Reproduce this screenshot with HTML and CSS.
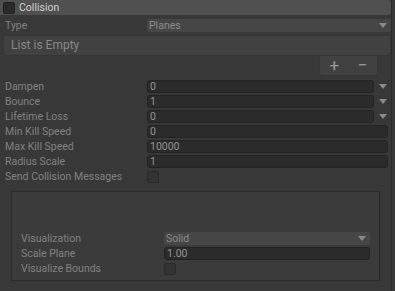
FILE: index.html
```html
<!DOCTYPE html>
<html>
	<head>
		<meta charset="UTF-8">
		<title>Collision</title>
		<link rel="stylesheet" href="styles.css">
	</head>
	<body>
		<div class="module">
			<div class="header">
				<span class="check"></span>
				<span class="title">Collision</span>
			</div>

			<div class="row first">
				<span class="label">Type</span>
				<div class="popup wide"><span>Planes</span><i class="arrow"></i></div>
			</div>

			<div class="list">List is Empty</div>
			<div class="list-footer">
				<span class="btn">+</span>
				<span class="btn minus">&minus;</span>
			</div>

			<div class="props">
				<div class="row">
					<span class="label">Dampen</span>
					<div class="field">0</div>
					<i class="arrow side"></i>
				</div>
				<div class="row">
					<span class="label">Bounce</span>
					<div class="field">1</div>
					<i class="arrow side"></i>
				</div>
				<div class="row">
					<span class="label">Lifetime Loss</span>
					<div class="field">0</div>
					<i class="arrow side"></i>
				</div>
				<div class="row">
					<span class="label">Min Kill Speed</span>
					<div class="field full">0</div>
				</div>
				<div class="row">
					<span class="label">Max Kill Speed</span>
					<div class="field full">10000</div>
				</div>
				<div class="row">
					<span class="label">Radius Scale</span>
					<div class="field full">1</div>
				</div>
				<div class="row">
					<span class="label">Send Collision Messages</span>
					<span class="toggle"></span>
				</div>
			</div>

			<div class="panel">
				<div class="row">
					<span class="label">Visualization</span>
					<div class="popup"><span>Solid</span><i class="arrow"></i></div>
				</div>
				<div class="row">
					<span class="label">Scale Plane</span>
					<div class="field">1.00</div>
				</div>
				<div class="row">
					<span class="label">Visualize Bounds</span>
					<span class="toggle"></span>
				</div>
			</div>
		</div>
	</body>
</html>
```

FILE: styles.css
```css
body {
    margin: 0;
    background: #383838;
    font: 10.5px Roboto, "Liberation Sans", sans-serif;
    color: #818181;
    height: 291px;
    overflow: hidden;
}

.module {
    border-right: 1px solid #2c2c2c;
    width: 391px;
    height: 291px;
}

.header {
    height: 15px;
    background: #505050;
    border-radius: 0 3px 3px 0;
    display: flex; align-items: center;
}

.header .check {
    width: 10px; height: 10px;
    margin-left: 3px;
    background: #2a2a2a;
    border: 1px solid #222;
    border-radius: 2px;
}

.header .title {
    margin-left: 4px;
    color: #d0d0d0;
    font-size: 10.5px;
}

.row {
    display: flex; align-items: center;
    height: 13px;
    margin-bottom: 2px;
}

.row.first {
    margin-top: 4px;
    margin-bottom: 0;
}

.label {
    flex: none;
    width: 142px;
    padding-left: 5px;
    white-space: nowrap;
}

.popup {
    flex: 1;
    height: 13px;
    background: #464646;
    border-radius: 2px;
    display: flex; align-items: center; justify-content: space-between;
    padding: 0 4px 0 2px;
    color: #8a8a8a;
}

.arrow {
    display: block;
    width: 0; height: 0;
    border-left: 4px solid transparent;
    border-right: 4px solid transparent;
    border-top: 5px solid #8a8a8a;
}

.arrow.side {
    margin: 0 4px 0 5px;
}

.list {
    margin: 3px 0 0 3px;
    height: 19px;
    background: #414141;
    border: 1px solid #363636;
    border-radius: 3px;
    font-size: 12px;
    line-height: 19px;
    padding-left: 7px;
    color: #888;
}

.list-footer {
    margin: 0 13px 0 auto;
    width: 57px;
    height: 19px;
    background: #414141;
    border: 1px solid #363636;
    border-top: none;
    border-radius: 0 0 3px 3px;
    display: flex; align-items: center; justify-content: space-around;
    color: #9a9a9a;
    font-size: 17px;
    line-height: 19px;
}

.props {
    margin-top: 4px;
}

.field {
    flex: 1;
    height: 11px;
    background: #2b2b2b;
    border: 1px solid #232323;
    border-radius: 3px;
    padding-left: 2px;
    line-height: 11px;
    color: #929292;
}

.field.full {
    margin-right: 3px;
}

.toggle {
    width: 10px; height: 10px;
    background: #333;
    border: 1px solid #2a2a2a;
    border-radius: 2px;
}

.panel {
    margin: 8px 11px 0 11px;
    height: 90px;
    background: #3b3b3b;
    border: 1px solid #2a2a2a;
    padding: 40px 9px 0 9px;
    box-sizing: border-box;
}

.panel .label {
    padding-left: 0;
    width: 143px;
}
```
